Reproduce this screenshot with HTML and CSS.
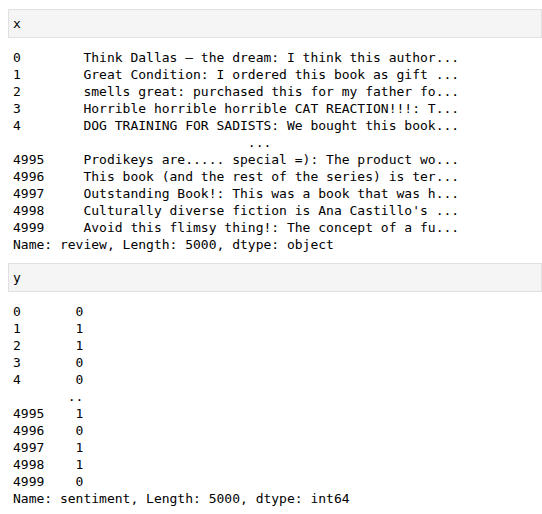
FILE: index.html
```html
<!DOCTYPE html>
<html>
<head>
<meta charset="utf-8">
<link rel="stylesheet" href="styles.css">
</head>
<body>
<div class="cell">
<pre class="input">x</pre>
<pre class="output">0        Think Dallas – the dream: I think this author...
1        Great Condition: I ordered this book as gift ...
2        smells great: purchased this for my father fo...
3        Horrible horrible horrible CAT REACTION!!!: T...
4        DOG TRAINING FOR SADISTS: We bought this book...
                              ...
4995     Prodikeys are..... special =): The product wo...
4996     This book (and the rest of the series) is ter...
4997     Outstanding Book!: This was a book that was h...
4998     Culturally diverse fiction is Ana Castillo's ...
4999     Avoid this flimsy thing!: The concept of a fu...
Name: review, Length: 5000, dtype: object</pre>
</div>
<div class="cell">
<pre class="input">y</pre>
<pre class="output">0       0
1       1
2       1
3       0
4       0
       ..
4995    1
4996    0
4997    1
4998    1
4999    0
Name: sentiment, Length: 5000, dtype: int64</pre>
</div>
</body>
</html>
```
FILE: styles.css
```css
html, body {
  margin: 0;
  padding: 0;
  background: #ffffff;
}
body {
  padding: 9px 0 0 8px;
  overflow: hidden;
}
pre {
  margin: 0;
  font-family: "DejaVu Sans Mono", monospace;
  font-size: 13px;
  line-height: 17px;
  color: #000000;
  font-variant-numeric: slashed-zero;
}
.cell {
  margin-bottom: 10px;
}
.input {
  background: #f5f5f5;
  border: 1px solid #e0e0e0;
  padding: 5px 4px;
}
.output {
  margin-top: 11px;
  padding-left: 5px;
}
```
